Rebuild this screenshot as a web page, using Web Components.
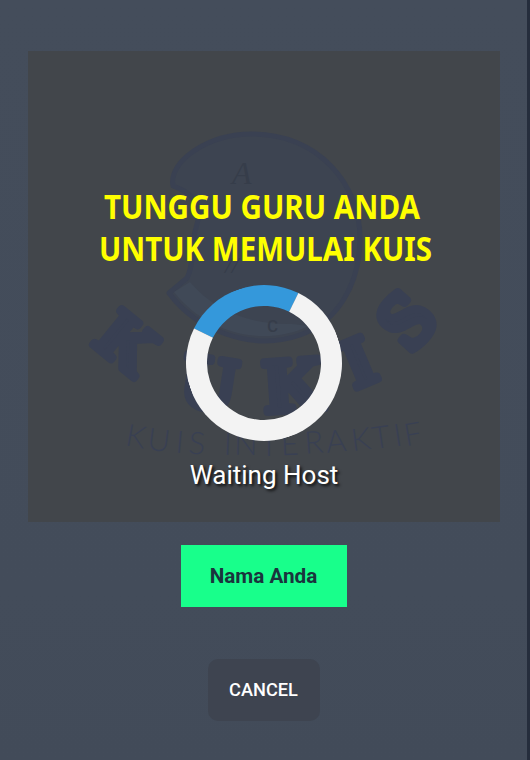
<!DOCTYPE html>
<html lang="id">
<head>
<meta charset="utf-8">
<title>Kukis</title>
<style>
html,body{margin:0;height:100%;background:#434c5a}
</style>
</head>
<body>
<waiting-screen></waiting-screen>
<script>
const define = (name, html) => customElements.define(name, class extends HTMLElement {
  constructor() {
    super();
    this.attachShadow({mode: 'open'}).innerHTML = html;
  }
});

define('kukis-logo', `
<style>
:host{display:block}
svg{display:block;width:100%;height:100%}
.big{font:bold 76px "Liberation Serif",serif;fill:#394053;stroke:#394053;stroke-width:8;stroke-linejoin:round;text-anchor:middle}
.tag{font:300 31px Lato,sans-serif;fill:#394053;text-anchor:middle}
</style>
<svg viewBox="28 51 472 471">
<path d="M173 186C168 162 207 134 252 134C318 134 360 184 360 238C360 285 337 322 300 335C252 352 196 330 169 293L187 278C195 263 190 245 196 228C202 209 197 194 173 186Z" fill="#3d4451" stroke="#3a4152" stroke-width="5" stroke-linejoin="round"/>
<path d="M174 292L190 282C215 312 253 325 292 324L309 326C265 347 208 335 174 292Z" fill="#404957"/>
<g fill="#363d4a" font-family="Liberation Serif,serif" font-style="italic">
<text x="232" y="184" font-size="32">A</text>
<text x="225" y="273" font-size="24">//</text>
<text x="267" y="332" font-size="22" font-family="Liberation Sans,sans-serif" font-style="normal">c</text>
</g>
<g class="big">
<text transform="translate(127 344) rotate(39)" y="22" style="font-size:70px">K</text>
<text transform="translate(209 384) rotate(9)" y="24">U</text>
<text transform="translate(294 386) rotate(-4)" y="24">K</text>
<text transform="translate(359 363) rotate(-23)" y="22" style="font-size:70px">I</text>
<text transform="translate(407 321) rotate(-48)" y="25" style="font-size:80px">S</text>
</g>
<g class="tag">
<text transform="translate(136 437) rotate(10)" y="10">K</text>
<text transform="translate(159 441) rotate(7)" y="10">U</text>
<text transform="translate(180 443) rotate(5)" y="10">I</text>
<text transform="translate(197 444) rotate(4)" y="10">S</text>
<text transform="translate(228 445) rotate(2)" y="10">I</text>
<text transform="translate(246 445) rotate(1)" y="10">N</text>
<text transform="translate(269 446)" y="10">T</text>
<text transform="translate(290 445) rotate(-2)" y="10">E</text>
<text transform="translate(314 443) rotate(-4)" y="10">R</text>
<text transform="translate(336 442) rotate(-6)" y="10">A</text>
<text transform="translate(361 440) rotate(-7)" y="10">K</text>
<text transform="translate(381 438) rotate(-8)" y="10">T</text>
<text transform="translate(398 436) rotate(-9)" y="10">I</text>
<text transform="translate(413 435) rotate(-10)" y="10">F</text>
</g>
</svg>`);

define('loading-ring', `
<style>
:host{display:block;width:156px;height:156px;box-sizing:border-box;border:21px solid #f3f3f3;border-top-color:#3498db;border-radius:50%;transform:rotate(-18.8deg)}
</style>`);

define('wait-panel', `
<style>
:host{display:grid;width:472px;height:471px;background:#42464b}
kukis-logo,.content{grid-area:1/1;min-width:0;min-height:0}
.content{position:relative;display:flex;flex-direction:column;align-items:center;padding-top:125px}
svg{display:block;width:472px;height:109px}
.title{font:bold 34px "Noto Sans",sans-serif;fill:#ff0}
.status{margin-top:14px;font:26px/40px Roboto,sans-serif;color:#fff;text-shadow:2px 2px 3px rgba(0,0,0,.8);white-space:nowrap}
</style>
<kukis-logo></kukis-logo>
<div class="content">
<svg viewBox="28 176 472 109"><g class="title">
<text x="104" y="219" textLength="316" lengthAdjust="spacingAndGlyphs">TUNGGU GURU ANDA</text>
<text x="99" y="261" textLength="333" lengthAdjust="spacingAndGlyphs">UNTUK MEMULAI KUIS</text>
</g></svg>
<loading-ring></loading-ring>
<div class="status"><slot></slot></div>
</div>`);

define('name-tag', `
<style>
:host{display:flex;align-items:center;justify-content:center;width:166px;height:62px;background:#18ff8b;color:#1a343d;font:bold 20.7px Roboto,sans-serif}
</style><slot></slot>`);

define('cancel-button', `
<style>
:host{display:block}
button{display:block;width:112px;height:62px;padding:0 0 2px;border:0;border-radius:10px;background:#3e4450;color:#fff;font:500 18.2px Roboto,sans-serif}
</style><button><slot></slot></button>`);

define('waiting-screen', `
<style>
:host{display:flex;flex-direction:column;align-items:center;box-sizing:border-box;width:530px;height:760px;padding:51px 0 0;border-right:3px solid #252d3c;background:linear-gradient(#444d5b,#434c5a 78%,#424b59);overflow:hidden}
wait-panel{margin-left:1px}
name-tag{margin-top:23px}
cancel-button{margin-top:52px}
</style>
<wait-panel>Waiting Host</wait-panel>
<name-tag>Nama Anda</name-tag>
<cancel-button>CANCEL</cancel-button>`);
</script>
</body>
</html>
